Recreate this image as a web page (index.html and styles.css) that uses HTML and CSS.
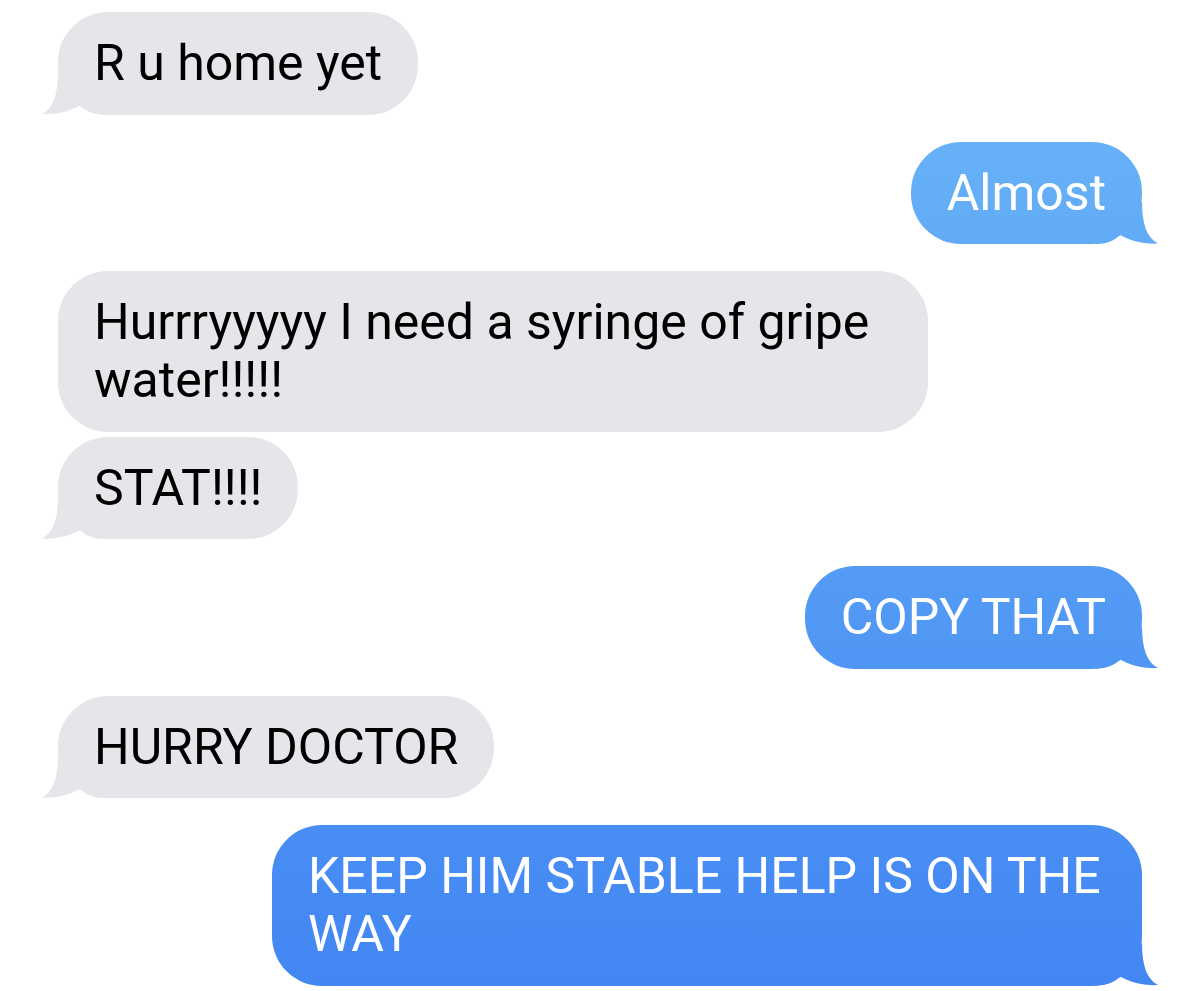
FILE: index.html
```html
<!DOCTYPE html>
<html lang="en">
<head>
<meta charset="utf-8">
<title>Messages</title>
<link rel="stylesheet" href="styles.css">
</head>
<body>
<div class="thread">
  <div class="msg them">R u home yet<span class="tail"></span></div>
  <div class="msg me">Almost<span class="tail"></span></div>
  <div class="msg them">Hurrryyyyy I need a syringe of gripe water!!!!!</div>
  <div class="msg them same">STAT!!!!<span class="tail"></span></div>
  <div class="msg me">COPY THAT<span class="tail"></span></div>
  <div class="msg them">HURRY DOCTOR<span class="tail"></span></div>
  <div class="msg me">KEEP HIM STABLE HELP IS ON THE WAY<span class="tail"></span></div>
</div>
</body>
</html>
```

FILE: styles.css
```css
html, body {
  margin: 0;
  padding: 0;
  background: #ffffff;
}

.thread {
  display: flex;
  flex-direction: column;
  padding: 12px 58px;
  font-family: Roboto, "Liberation Sans", Arial, sans-serif;
  font-size: 50px;
  line-height: 58px;
}

.msg {
  position: relative;
  isolation: isolate;
  max-width: 798px;
  padding: 22.25px 36px 22.25px 36px;
  border-radius: 50px;
  margin-top: 27px;
}

.msg:first-child {
  margin-top: 0;
}

.msg.same {
  margin-top: 5px;
}

.them {
  align-self: flex-start;
  background: #e5e5ea;
  color: #000000;
}

.me {
  align-self: flex-end;
  background: linear-gradient(to bottom, #6cb8f8 0px, #4286f3 991px) fixed;
  color: #ffffff;
}

.tail {
  position: absolute;
  z-index: -1;
  bottom: 0;
  width: 62px;
  height: 50px;
  background: inherit;
}

.them .tail {
  left: -16px;
  clip-path: path("M16,8 C16,30 11,44 0,49.5 C14,50.5 28,46.5 38,41 C44,47 52,50 62,50 L62,8 Z");
}

.me .tail {
  right: -16px;
  clip-path: path("M46,8 C46,30 51,44 62,49.5 C48,50.5 34,46.5 24,41 C18,47 10,50 0,50 L0,8 Z");
}
```
